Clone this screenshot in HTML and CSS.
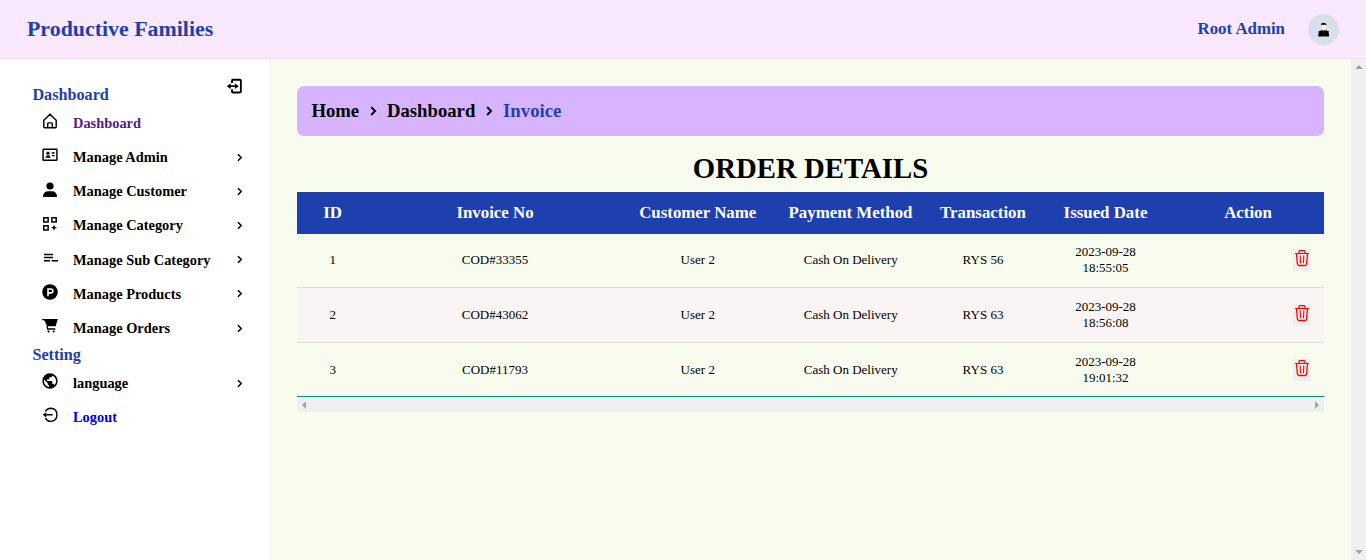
FILE: index.html
```html
<!DOCTYPE html>
<html lang="en">
<head>
<meta charset="utf-8">
<title>Productive Families</title>
<link rel="stylesheet" href="styles.css">
</head>
<body>
<svg class="defs" width="0" height="0">
  <symbol id="chev" viewBox="0 0 24 24"><path d="M9.500 6.700 14.800 12l-5.300 5.300" fill="none" stroke="#000" stroke-width="2.500"/></symbol>
  <symbol id="trash" viewBox="0 0 16 18"><g fill="none" stroke="red" stroke-linecap="round"><path stroke-width="1.1" d="M1.500 4.500H14.500"/><path stroke-width="1.3" d="M2.500 4.800L3.400 15Q3.600 16.500 5 16.500H11Q12.400 16.500 12.600 15L13.500 4.800"/><path stroke-width="1.3" d="M5 3.800V2.600Q5 1.600 6 1.600H10Q11 1.600 11 2.600V3.800"/><path stroke-width="1.1" d="M6.200 6.800L6.500 13.800M9.800 6.800L9.500 13.800"/></g></symbol>
</svg>
<header class="topbar">
  <h1 class="brand">Productive Families</h1>
  <div class="user">
    <span class="user-name">Root Admin</span>
    <svg class="avatar" viewBox="0 0 31 31"><circle cx="15.500" cy="15.500" r="15.500" fill="#d9dfe8"/><path d="M13.200 11h5v2q-.5 2.500-2.500 2.500t-2.500-2.500z" fill="#fff"/><path d="M13 11.500V10.300Q13.300 8.800 15.500 8.800q2.600 0 2.800 1.700v1.200l-.9-1h-3.500z"/><path d="M11.300 18q.3-1.600 2-1.900l2.400-.7 2.500.7q1.700.3 2 1.900z" fill="#555"/><path d="m14.300 15.300 1.400 1.500 1.400-1.500z" fill="#fff"/><path d="M10.800 17h9.800l.5 5.500H10.200z"/><path d="M15.200 19.500h1v.7h-1z" fill="#777"/></svg>
  </div>
</header>
<div class="body">
  <aside class="sidebar">
    <div class="side-head">
      <h2 class="side-title">Dashboard</h2>
      <svg class="toggle" viewBox="0 0 24 24"><path d="M8.500 7V3.500q0-1 1-1h10q1.500 0 1.500 1.500v15q0 1.500-1.500 1.500h-10q-1 0-1-1V16" fill="none" stroke="#000" stroke-width="2.600"/><path d="M3 11.500h12" stroke="#000" stroke-width="2.400"/><path d="m1 11.500 5.500-4v8zM18 11.500l-5.500-4v8z"/></svg>
    </div>
    <ul class="menu">
      <li class="item visited"><svg class="icon" viewBox="0 0 24 24"><path d="M2.700 10.800 12 2l9.300 8.800v9.700q0 1.500-1.500 1.500H4.200q-1.500 0-1.500-1.500zM8.500 22v-6q0-1.200 1.200-1.200h4.600q1.200 0 1.200 1.200V22" fill="none" stroke="#000" stroke-width="2.200"/></svg><span>Dashboard</span></li>
      <li class="item"><svg class="icon" viewBox="0 0 24 24"><rect x="1.600" y="3.500" width="20.800" height="16.500" rx="1" fill="none" stroke="#000" stroke-width="2.200"/><circle cx="9" cy="9.200" r="2.400"/><path d="M5 16q.5-3.700 4-3.700t4 3.700zM14.500 8h4.500v2h-4.500zM15 12h4v2h-4z"/></svg><span>Manage Admin</span><svg class="chevron"><use href="#chev"/></svg></li>
      <li class="item"><svg class="icon" viewBox="0 0 24 24"><circle cx="12" cy="6" r="5.400"/><path d="M1.500 22.500q0-8.500 8-8.500h5q8 0 8 8.500z"/></svg><span>Manage Customer</span><svg class="chevron"><use href="#chev"/></svg></li>
      <li class="item"><svg class="icon" viewBox="0 0 24 24"><path d="M2.700 2.500h6.500V9H2.700zM14.800 2.500h6.500V9h-6.500zM2.700 14.500h6.500V21H2.700z" fill="none" stroke="#000" stroke-width="2.200"/><path d="m18 13.300 1.400 2.800 3.100 1.400-3.100 1.400-1.400 3.100-1.400-3.100-3.100-1.400 3.100-1.400z"/></svg><span>Manage Category</span><svg class="chevron"><use href="#chev"/></svg></li>
      <li class="item"><svg class="icon" viewBox="0 0 24 24"><path d="M3 5.500h13.500v2.200H3zM3 10.200h13.500v2.200H3zM3 15h9v2.200H3zM14.500 15H24v2.200h-9.500z"/></svg><span>Manage Sub Category</span><svg class="chevron"><use href="#chev"/></svg></li>
      <li class="item"><svg class="icon" viewBox="0 0 24 24"><circle cx="12" cy="12" r="11.700"/><path d="M9 18.200V7.500h4.300q3 0 3 2.900t-3 2.900H9" fill="none" stroke="#fff" stroke-width="2.300"/></svg><span>Manage Products</span><svg class="chevron"><use href="#chev"/></svg></li>
      <li class="item"><svg class="icon" viewBox="0 0 24 24"><path d="M.3 1.500H23.700L20.500 12.500H7.500L4 4.500Q3.500 3.500 2.500 3.500H.3z"/><path d="M7.500 12l1 4.500H20" fill="none" stroke="#000" stroke-width="2"/><circle cx="9.800" cy="20.200" r="1.600"/><circle cx="17.500" cy="20.200" r="1.600"/></svg><span>Manage Orders</span><svg class="chevron"><use href="#chev"/></svg></li>
    </ul>
    <h2 class="side-title">Setting</h2>
    <ul class="menu">
      <li class="item"><svg class="icon" viewBox="0 0 24 24"><path fill-rule="evenodd" d="M12 .5a11.500 11.500 0 1 0 0 23 11.500 11.500 0 0 0 0-23zM10.800 21.100a9.200 9.200 0 0 1-7.700-11.200l5.500 5.500v1.200c0 1.200 1 2.200 2.200 2.200zM18.800 18.200a2.200 2.200 0 0 0-2.200-1.600h-1.100v-3.400c0-.6-.5-1.100-1.100-1.100H7.500V9.800h2.300c.7 0 1.200-.5 1.200-1.200V6.400h2.300c1.200 0 2.200-1 2.200-2.300v-.5a9.200 9.200 0 0 1 3.300 14.600z"/></svg><span>language</span><svg class="chevron"><use href="#chev"/></svg></li>
      <li class="item link"><svg class="icon" viewBox="0 0 24 24"><path d="M5 6.700q2.700-4.900 8-4.900 9.400.5 9.400 9.900T13 21.600q-5.300 0-8-4.900M3 11.700h13" fill="none" stroke="#000" stroke-width="2.100"/><path d="m1 11.700 5.500-4v8z"/></svg><span>Logout</span></li>
    </ul>
  </aside>
  <main class="main">
    <nav class="crumbs"><span>Home</span><svg class="crumb-sep"><use href="#chev"/></svg><span>Dashboard</span><svg class="crumb-sep"><use href="#chev"/></svg><span class="current">Invoice</span></nav>
    <h2 class="title">ORDER DETAILS</h2>
    <table class="orders">
      <colgroup><col class="c-id"><col class="c-inv"><col class="c-cust"><col class="c-pay"><col class="c-trans"><col class="c-date"><col class="c-act"></colgroup>
      <thead><tr><th>ID</th><th>Invoice No</th><th>Customer Name</th><th>Payment Method</th><th>Transaction</th><th>Issued Date</th><th>Action</th></tr></thead>
      <tbody>
        <tr><td>1</td><td>COD#33355</td><td>User 2</td><td>Cash On Delivery</td><td>RYS 56</td><td>2023-09-28<br>18:55:05</td><td class="act"><button class="del"><svg><use href="#trash"/></svg></button></td></tr>
        <tr><td>2</td><td>COD#43062</td><td>User 2</td><td>Cash On Delivery</td><td>RYS 63</td><td>2023-09-28<br>18:56:08</td><td class="act"><button class="del"><svg><use href="#trash"/></svg></button></td></tr>
        <tr><td>3</td><td>COD#11793</td><td>User 2</td><td>Cash On Delivery</td><td>RYS 63</td><td>2023-09-28<br>19:01:32</td><td class="act"><button class="del"><svg><use href="#trash"/></svg></button></td></tr>
      </tbody>
    </table>
    <div class="hbar"><i class="left"></i><i class="right"></i></div>
  </main>
  <div class="vbar"><i class="up"></i><i class="down"></i></div>
</div>
</body>
</html>
```
FILE: styles.css
```css
* { box-sizing: border-box; margin: 0; padding: 0; }
body { height: 560px; overflow: hidden; font-family: "Liberation Serif", serif; color: #000; background: #f8fcee; display: flex; flex-direction: column; }
.defs { position: absolute; }
.topbar { height: 59px; flex: none; display: flex; align-items: center; justify-content: space-between; padding: 0 27px; background: #fae8ff; border-bottom: 1px solid #f0e0f4; }
.brand { font-size: 21.900px; line-height: 26px; color: #1e40af; }
.user { display: flex; align-items: center; gap: 23px; }
.user-name { font-size: 16.850px; font-weight: bold; color: #1e40af; }
.avatar { width: 31px; height: 31px; }
.body { flex: 1; display: flex; min-height: 0; }
.sidebar { width: 271px; flex: none; background: #fff; border-right: 1px solid #eef1e6; padding-top: 18px; }
.side-head { display: flex; justify-content: space-between; padding-right: 27px; height: 29px; }
.side-title { font-size: 16.200px; line-height: 19px; height: 20px; padding-left: 32.400px; color: #1e40af; }
.side-head .side-title { height: auto; padding-top: 9px; }
.toggle { width: 17px; height: 17px; margin-top: 1px; }
.menu { list-style: none; }
.item { height: 34.200px; display: flex; align-items: center; font-size: 14.400px; font-weight: bold; padding: 0 23px 0 42.500px; }
.side-head + .menu { padding-top: .3px; }
.side-title + .menu { padding-top: .8px; }
.item span { flex: 1; margin-left: 14.500px; }
.icon { width: 16px; height: 16px; margin: -4.500px .3px 0 -.3px; }
.chevron { width: 15px; height: 15px; margin-top: -1px; }
.visited { color: #551a8b; }
.link { color: #00e; }
.main { flex: 1; padding: 27px 27px 0 26px; }
.crumbs { height: 50px; padding-left: 14.400px; border-radius: 7px; background: #d8b4fe; display: flex; align-items: center; font-size: 18.720px; font-weight: bold; }
.crumb-sep { width: 18px; height: 18px; margin: 0 4.700px 0 5.100px; }
.current { color: #1e40af; }
.title { font-size: 28.800px; line-height: 33px; text-align: center; margin: 16px 0 7px; }
.orders { width: 1027px; border-collapse: separate; border-spacing: 0; table-layout: fixed; text-align: center; }
.c-id { width: 71px; }
.c-inv { width: 254px; }
.c-cust { width: 151px; }
.c-pay { width: 155px; }
.c-trans { width: 110px; }
.c-date { width: 135px; }
.c-act { width: 151px; }
.orders th { height: 42px; background: #1e40af; color: #fff; font-size: 16.850px; }
.orders th:last-child { padding-right: 1px; }
.orders td { height: 55px; font-size: 13px; line-height: 16px; border-bottom: 1px solid #ddd; }
.orders td:nth-child(1), .orders td:nth-child(3), .orders th:nth-child(3), .orders td:nth-child(4) { padding-left: .5px; }
.orders tbody tr:first-child td { height: 54px; padding-bottom: 1px; }
.orders tbody tr:nth-child(2) td { background: #fbf4f4; }
.orders tbody tr:last-child td { height: 54px; border-bottom-color: #009879; }
.orders .act { text-align: right; padding-right: 13px; }
.del { width: 18px; height: 22px; border: 0; border-radius: 1px; background: #efefef; display: inline-block; vertical-align: middle; }
.del svg { width: 16px; height: 18px; display: block; margin: -4px auto 0; }
.hbar { height: 15px; background: #f0f0f0; display: flex; justify-content: space-between; align-items: center; padding: 0 5px; }
.vbar { width: 15px; background: #f0f0f0; display: flex; flex-direction: column; justify-content: space-between; align-items: center; padding: 6px 0; }
.hbar i, .vbar i { width: 0; height: 0; border: 4px solid transparent; }
.hbar .left { border-left: 0; border-right-color: #a3a3a3; }
.hbar .right { border-right: 0; border-left-color: #a3a3a3; }
.vbar .up { border-top: 0; border-bottom-color: #a3a3a3; }
.vbar .down { border-bottom: 0; border-top-color: #a3a3a3; }
```
